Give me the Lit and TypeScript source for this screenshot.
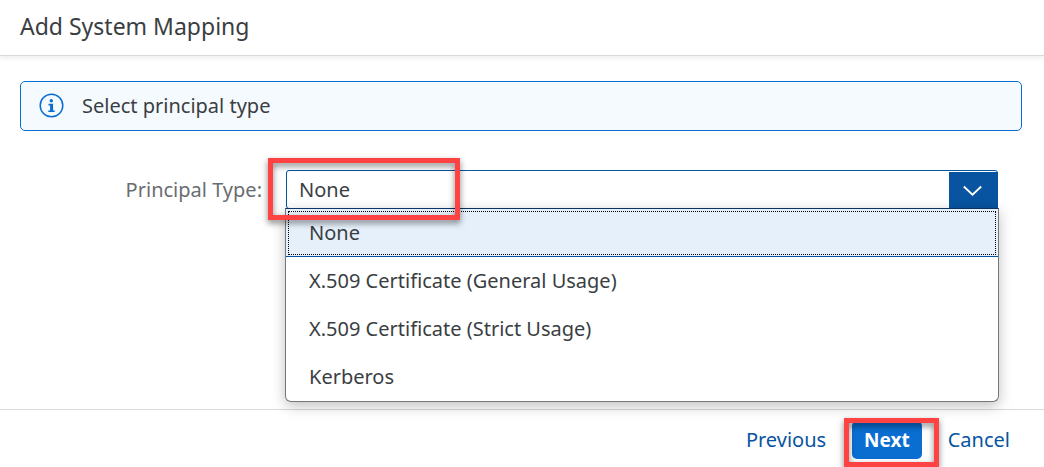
import { LitElement, html, css } from "lit";
import { customElement, state } from "lit/decorators.js";
import { classMap } from "lit/directives/class-map.js";

const PRINCIPAL_TYPES = [
  "None",
  "X.509 Certificate (General Usage)",
  "X.509 Certificate (Strict Usage)",
  "Kerberos",
];

@customElement("app-root")
export class AppRoot extends LitElement {
  @state() private selected = PRINCIPAL_TYPES[0];

  static styles = css`
    :host {
      display: flex;
      flex-direction: column;
      min-height: 100vh;
      overflow: hidden;
      background: #fff;
      color: #3a3e42;
      font-family: "Noto Sans", "Open Sans", sans-serif;
      font-size: 20px;
      line-height: 24px;
    }
    * {
      box-sizing: border-box;
    }
    .header {
      padding: 10px 20px 12px;
      border-bottom: 1px solid #d9d9d9;
      box-shadow: 0 2px 5px rgba(0, 0, 0, 0.08);
    }
    .title {
      margin: 0;
      font-size: 23px;
      font-weight: 400;
      line-height: 33px;
    }
    .content {
      flex: 1;
      padding: 25px 22px 0 20px;
    }
    .strip {
      display: flex;
      align-items: center;
      gap: 18px;
      padding: 11px 18px 12px;
      border: 1px solid #0a6ed1;
      border-radius: 5px;
      background: #f5faff;
    }
    .info {
      display: block;
      width: 25px;
      height: 25px;
    }
    .strip-text {
      margin: 0;
    }
    .form {
      display: grid;
      grid-template-columns: 242px 1fr;
      column-gap: 24px;
      align-items: center;
      margin-top: 39px;
      padding-right: 24px;
    }
    .label {
      text-align: right;
      color: #6a6d70;
    }
    .field {
      position: relative;
      height: 39px;
    }
    .select {
      display: block;
      width: 100%;
      height: 100%;
      margin: 0;
      padding: 0 60px 0 12px;
      appearance: none;
      border: 1px solid #0854a0;
      border-radius: 3px;
      outline: none;
      background: #fff;
      color: inherit;
      font: inherit;
    }
    .arrow {
      position: absolute;
      top: 2px;
      right: 0;
      bottom: 0;
      display: grid;
      place-items: center;
      width: 49px;
      background: #0854a0;
      pointer-events: none;
    }
    .popup {
      position: absolute;
      top: 38px;
      left: -1px;
      right: -1px;
      margin: 0;
      padding: 0;
      list-style: none;
      border: 1px solid #75787b;
      border-top-color: #0a3564;
      border-radius: 0 0 6px 6px;
      background: #fff;
      box-shadow: 0 4px 14px rgba(0, 0, 0, 0.25);
    }
    .option {
      height: 48px;
      padding: 12px 23px;
      cursor: pointer;
    }
    .option.active {
      border-bottom: 1px solid #0854a0;
      background: #e5f0fa;
      outline: 1px dotted #000;
      outline-offset: -3px;
    }
    .footer {
      display: flex;
      justify-content: flex-end;
      gap: 14px;
      padding: 11px 22px 8px;
      border-top: 1px solid #d9d9d9;
    }
    .button {
      height: 38px;
      margin: 0;
      padding: 0 12px;
      border: 0;
      border-radius: 5px;
      background: transparent;
      color: #0854a0;
      font: inherit;
      cursor: pointer;
    }
    .button.primary {
      background: #0a6ed1;
      color: #fff;
      font-size: 19px;
      font-weight: 700;
    }
    .step {
      position: relative;
    }
    .mark {
      position: absolute;
      border: 5px solid #ff4343;
      filter: drop-shadow(0 3px 3px rgba(0, 0, 0, 0.5));
      pointer-events: none;
    }
    .mark-field {
      top: -12px;
      left: -18px;
      width: 192px;
      height: 62px;
    }
    .mark-next {
      top: -3px;
      right: -17px;
      bottom: -8px;
      left: -8px;
    }
  `;

  private onChange(event: Event) {
    this.selected = (event.target as HTMLSelectElement).value;
  }

  render() {
    return html`
      <header class="header">
        <h1 class="title">Add System Mapping</h1>
      </header>
      <main class="content">
        <div class="strip" role="note">
          <svg class="info" viewBox="0 0 25 25" aria-hidden="true">
            <circle cx="12.5" cy="12.5" r="11.3" fill="none" stroke="#0a6ed1" stroke-width="1.5" />
            <circle cx="12.3" cy="7.8" r="1.7" fill="#0a6ed1" />
            <path
              d="M9.5 10.8h4.6v6.6h1.6v1.6H9.3v-1.6h1.8v-5H9.5z"
              fill="#0a6ed1"
            />
          </svg>
          <p class="strip-text">Select principal type</p>
        </div>
        <div class="form">
          <label class="label" for="principal">Principal Type:</label>
          <div class="field">
            <select class="select" id="principal" .value=${this.selected} @change=${this.onChange}>
              ${PRINCIPAL_TYPES.map(
                (type) => html`<option ?selected=${type === this.selected}>${type}</option>`
              )}
            </select>
            <span class="arrow">
              <svg width="21" height="12" viewBox="0 0 21 12" aria-hidden="true">
                <path d="M.8 1.5 9.5 9.7l8.7-8.2" fill="none" stroke="#fff" stroke-width="1.8" />
              </svg>
            </span>
            <ul class="popup" role="listbox" aria-label="Principal Type">
              ${PRINCIPAL_TYPES.map(
                (type) => html`<li
                  class=${classMap({ option: true, active: type === this.selected })}
                  role="option"
                  aria-selected=${type === this.selected}
                  @click=${() => (this.selected = type)}
                >
                  ${type}
                </li>`
              )}
            </ul>
            <span class="mark mark-field"></span>
          </div>
        </div>
      </main>
      <footer class="footer">
        <button class="button" type="button">Previous</button>
        <div class="step">
          <button class="button primary" type="button">Next</button>
          <span class="mark mark-next"></span>
        </div>
        <button class="button" type="button">Cancel</button>
      </footer>
    `;
  }
}
